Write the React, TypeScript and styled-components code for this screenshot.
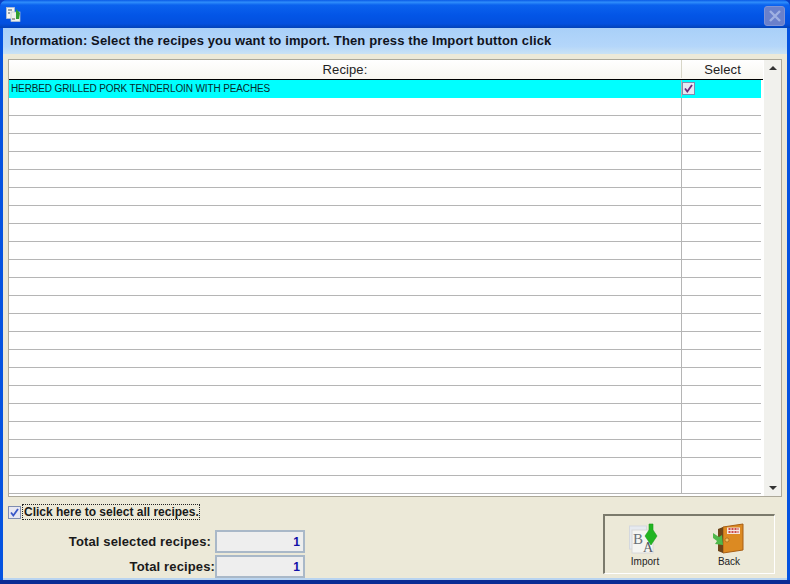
import React from 'react';
import styled, { createGlobalStyle } from 'styled-components';

const ROW_COUNT = 23;

const GlobalStyle = createGlobalStyle`
  html, body {
    margin: 0;
    padding: 0;
    background: #0a3fc4;
  }
`;

const Window = styled.div`
  width: 790px;
  height: 584px;
  box-sizing: border-box;
  display: flex;
  flex-direction: column;
  overflow: hidden;
  background: #0553e0;
  border-bottom: 4px solid #0a2c94;
  border-radius: 7px 7px 0 0;
  font-family: 'Liberation Sans', Arial, sans-serif;
  color: #000;
`;

const TitleBar = styled.div`
  height: 28px;
  flex-shrink: 0;
  display: flex;
  align-items: center;
  justify-content: space-between;
  padding: 0 5px 0 6px;
  box-sizing: border-box;
  background: linear-gradient(
    180deg,
    #0a5ae6 0%,
    #2f8dfb 8%,
    #0b62ee 18%,
    #0355e6 55%,
    #0350de 85%,
    #0242b8 100%
  );
`;

const CloseButton = styled.div`
  width: 21px;
  height: 20px;
  margin-top: 3px;
  display: flex;
  align-items: center;
  justify-content: center;
  background: #6a80cb;
  border: 1px solid #8093d4;
  border-radius: 3px;
  box-sizing: border-box;
`;

const Client = styled.div`
  flex: 1;
  min-height: 0;
  margin: 0 3px;
  display: flex;
  flex-direction: column;
  background: #ece9d8;
  border-bottom: 2px solid #b9d4f0;
`;

const InfoBar = styled.div`
  height: 26px;
  flex-shrink: 0;
  box-sizing: border-box;
  padding: 0 0 2px 7px;
  display: flex;
  align-items: center;
  font-size: 13px;
  font-weight: bold;
  letter-spacing: 0.13px;
  color: #10131c;
  background: linear-gradient(180deg, #a9d0f8 0%, #b4d6fa 70%, #c9e2f4 100%);
`;

const GridFrame = styled.div`
  margin: 5px 5px 0 5px;
  height: 438px;
  flex-shrink: 0;
  display: flex;
  box-sizing: border-box;
  background: #fff;
  border: 1px solid #aca899;
`;

const Grid = styled.div`
  width: 754px;
  flex-shrink: 0;
  display: flex;
  flex-direction: column;
`;

const HeaderRow = styled.div`
  height: 20px;
  flex-shrink: 0;
  box-sizing: border-box;
  padding-bottom: 1px;
  display: grid;
  grid-template-columns: 673px 81px;
  border-bottom: 1px solid #000;
  background: linear-gradient(180deg, #ffffff 0%, #f7f6f0 100%);
  font-size: 13px;
  letter-spacing: 0.1px;
  color: #222;
`;

const HeaderCell = styled.div<{ $divider?: boolean }>`
  display: flex;
  align-items: center;
  justify-content: center;
  border-right: ${({ $divider }) => ($divider ? '1px solid #d8d6c8' : 'none')};
`;

const Row = styled.div<{ $selected?: boolean }>`
  height: 18px;
  width: 752px;
  flex-shrink: 0;
  box-sizing: border-box;
  display: grid;
  grid-template-columns: 673px 79px;
  border-bottom: 1px solid ${({ $selected }) => ($selected ? '#00ffff' : '#b5b5b5')};
  background: ${({ $selected }) => ($selected ? '#00ffff' : '#fff')};
`;

const RecipeCell = styled.div`
  box-sizing: border-box;
  padding-left: 2px;
  display: flex;
  align-items: center;
  font-size: 10px;
  letter-spacing: -0.12px;
  color: #062c2c;
  white-space: nowrap;
  border-right: 1px solid #b5b5b5;
`;

const SelectCell = styled.div`
  box-sizing: border-box;
  display: flex;
  align-items: center;
`;

const Scrollbar = styled.div`
  flex: 1;
  margin-left: 1px;
  display: flex;
  flex-direction: column;
  justify-content: space-between;
  align-items: center;
  padding: 6px 0;
  box-sizing: border-box;
  background: #f1f1ed;
`;

const Arrow = styled.div<{ $down?: boolean }>`
  width: 0;
  height: 0;
  border-left: 4px solid transparent;
  border-right: 4px solid transparent;
  border-top: ${({ $down }) => ($down ? '4px solid #333' : 'none')};
  border-bottom: ${({ $down }) => ($down ? 'none' : '4px solid #333')};
`;

const Footer = styled.div`
  flex: 1;
  min-height: 0;
  display: flex;
  justify-content: space-between;
  padding: 5px 12px 0 5px;
`;

const Summary = styled.div`
  display: flex;
  flex-direction: column;
`;

const SelectAll = styled.div`
  display: flex;
  align-items: center;
  gap: 2px;
  height: 17px;
  margin-top: 3px;
`;

const SelectAllLabel = styled.span`
  font-size: 12px;
  font-weight: bold;
  line-height: 14px;
  color: #1a1a1a;
  outline: 1px dotted #222;
  padding: 0 0 0 1px;
`;

const Totals = styled.div`
  display: flex;
  flex-direction: column;
  gap: 2px;
  margin-top: 11px;
`;

const TotalRow = styled.div<{ $gap: number }>`
  display: flex;
  justify-content: flex-end;
  align-items: center;
  width: 297px;
  gap: ${({ $gap }) => $gap}px;
`;

const TotalLabel = styled.span`
  font-size: 13px;
  font-weight: bold;
  letter-spacing: 0.13px;
  color: #1a1a1a;
`;

const TotalValue = styled.div`
  width: 90px;
  height: 23px;
  box-sizing: border-box;
  display: flex;
  align-items: center;
  justify-content: flex-end;
  padding-right: 3px;
  font-size: 12px;
  font-weight: bold;
  color: #1010a8;
  background: #eeeeee;
  border: 2px solid #a9b8c8;
`;

const ActionPanel = styled.div`
  width: 172px;
  height: 60px;
  margin-top: 12px;
  box-sizing: border-box;
  display: grid;
  grid-template-columns: 80px 88px;
  border-top: 2px solid #7b7a6c;
  border-left: 2px solid #7b7a6c;
  border-right: 1px solid #fff;
  border-bottom: 1px solid #fff;
`;

const ActionButton = styled.div`
  display: flex;
  flex-direction: column;
  align-items: center;
  padding-top: 7px;
  font-size: 10px;
  color: #222;
  gap: 1px;
`;

const CheckBox = ({ tone, size = 13 }: { tone: string; size?: number }) => (
  <svg width={size} height={size} viewBox="0 0 13 13">
    <rect x="0.5" y="0.5" width="12" height="12" fill="#e8e8f2" stroke="#7f8db0" />
    <path d="M3 6.5 L5.3 9.5 L10 3" fill="none" stroke={tone} strokeWidth="1.8" />
  </svg>
);

const AppIcon = () => (
  <svg width="15" height="15" viewBox="0 0 15 15" style={{ marginTop: 1 }}>
    <rect x="0.5" y="0.5" width="8" height="11" fill="#f4f4f0" stroke="#b8c4d0" strokeWidth="0.7" />
    <rect x="5" y="5" width="9" height="9.5" fill="#eef1ea" stroke="#b8c4d0" strokeWidth="0.7" />
    <path d="M2 3 h4 M2 6 h2" stroke="#3f5560" strokeWidth="1.2" />
    <path d="M10 2 L14 6 L13 12 H10 Z" fill="#2f9e2f" />
    <path d="M6 12 h3" stroke="#555" strokeWidth="1.2" />
  </svg>
);

const CloseGlyph = () => (
  <svg width="14" height="14" viewBox="0 0 14 14">
    <path d="M2 2 L12 12 M12 2 L2 12" stroke="#9fb0e2" strokeWidth="2.4" />
  </svg>
);

const ImportIcon = () => (
  <svg width="32" height="32" viewBox="0 0 32 32">
    <rect x="0.5" y="3" width="17" height="23" fill="#e6eaf0" stroke="#d4d8de" />
    <rect x="3" y="7" width="21" height="23" fill="#f5f5f2" stroke="#d8d8d8" />
    <text x="4" y="21" fontFamily="'Liberation Serif', serif" fontSize="15" fill="#6a7078">B</text>
    <text x="14" y="29" fontFamily="'Liberation Serif', serif" fontSize="14" fill="#555c66">A</text>
    <path d="M20 1 H24 V7 L28 13 L22 22 L16 13 L20 7 Z" fill="#22b522" stroke="#1c9a1c" strokeWidth="0.6" />
  </svg>
);

const BackIcon = () => (
  <svg width="34" height="32" viewBox="0 0 34 32">
    <path d="M11 4 L31 1 V27 L11 30 Z" fill="#dc8a22" stroke="#a85f14" />
    <path d="M11 4 L6 6 V28 L11 30 Z" fill="#6e4518" />
    <rect x="15" y="4.5" width="13" height="6.5" fill="#f4e6e0" />
    <path d="M16.5 6 h10 M16.5 9 h10" stroke="#c01818" strokeWidth="1.4" strokeDasharray="2 1" />
    <circle cx="15" cy="17" r="2" fill="#f2c060" stroke="#9a5a10" strokeWidth="0.6" />
    <path d="M1 10 L7 14 L10 12 L11 22 L3 21 L5 18 L1 15 Z" fill="#4fb84a" />
  </svg>
);

const App = () => {
  const rows = Array.from({ length: ROW_COUNT }, (_, i) => i);

  return (
    <>
      <GlobalStyle />
      <Window>
        <TitleBar>
          <AppIcon />
          <CloseButton>
            <CloseGlyph />
          </CloseButton>
        </TitleBar>
        <Client>
          <InfoBar>Information: Select the recipes you want to import. Then press the Import button click</InfoBar>
          <GridFrame>
            <Grid>
              <HeaderRow>
                <HeaderCell $divider>Recipe:</HeaderCell>
                <HeaderCell>Select</HeaderCell>
              </HeaderRow>
              {rows.map((i) => (
                <Row key={i} $selected={i === 0}>
                  <RecipeCell>{i === 0 && 'HERBED GRILLED PORK TENDERLOIN WITH PEACHES'}</RecipeCell>
                  <SelectCell>{i === 0 && <CheckBox tone="#6b2a7a" />}</SelectCell>
                </Row>
              ))}
            </Grid>
            <Scrollbar>
              <Arrow />
              <Arrow $down />
            </Scrollbar>
          </GridFrame>
          <Footer>
            <Summary>
              <SelectAll>
                <CheckBox tone="#3a58c8" />
                <SelectAllLabel>Click here to select all recipes.</SelectAllLabel>
              </SelectAll>
              <Totals>
                <TotalRow $gap={4}>
                  <TotalLabel>Total selected recipes:</TotalLabel>
                  <TotalValue>1</TotalValue>
                </TotalRow>
                <TotalRow $gap={0}>
                  <TotalLabel>Total recipes:</TotalLabel>
                  <TotalValue>1</TotalValue>
                </TotalRow>
              </Totals>
            </Summary>
            <ActionPanel>
              <ActionButton>
                <ImportIcon />
                Import
              </ActionButton>
              <ActionButton>
                <BackIcon />
                Back
              </ActionButton>
            </ActionPanel>
          </Footer>
        </Client>
      </Window>
    </>
  );
};

export default App;
